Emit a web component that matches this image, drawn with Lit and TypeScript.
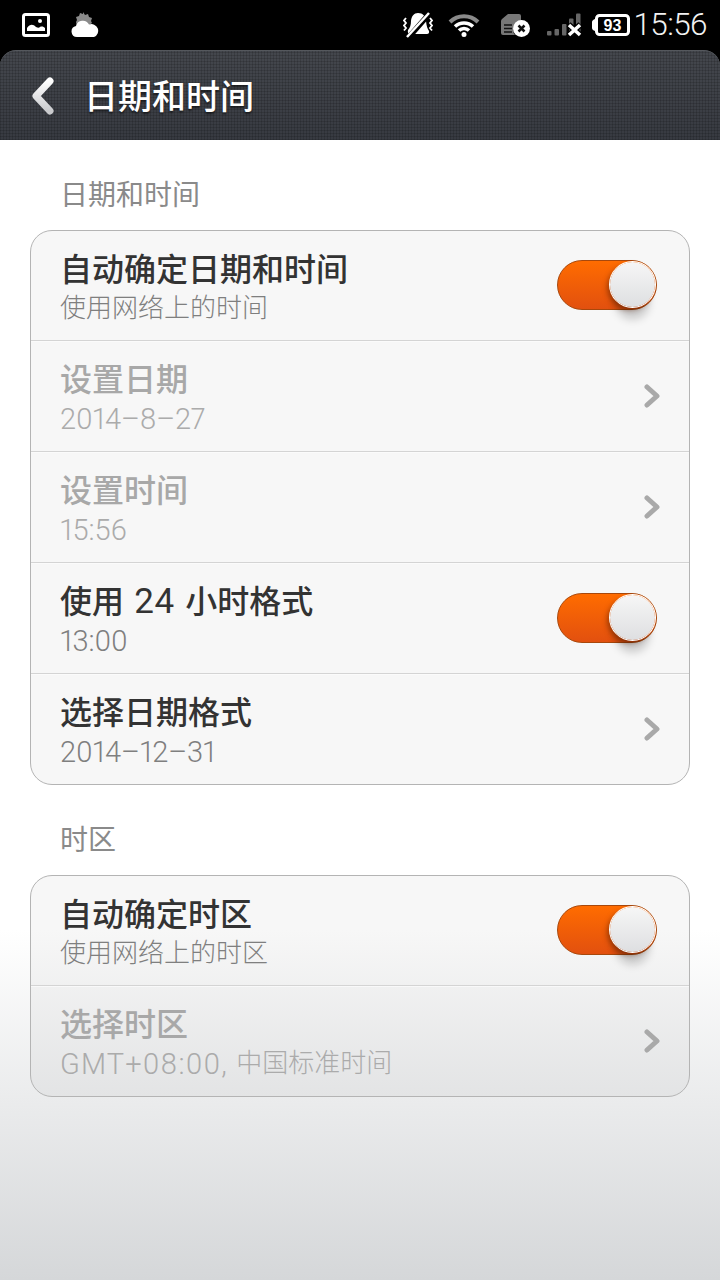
import {LitElement, html, css, svg} from 'lit';
import {customElement} from 'lit/decorators.js';

type Row = {title: string; sub: string; off?: boolean; sw?: boolean; wide?: boolean};

const dateRows: Row[] = [
  {title: '自动确定日期和时间', sub: '使用网络上的时间', sw: true},
  {title: '设置日期', sub: '2014–8–27', off: true},
  {title: '设置时间', sub: '15:56', off: true},
  {title: '使用 24 小时格式', sub: '13:00', sw: true},
  {title: '选择日期格式', sub: '2014–12–31'},
];

const zoneRows: Row[] = [
  {title: '自动确定时区', sub: '使用网络上的时区', sw: true},
  {title: '选择时区', sub: 'GMT+08:00, 中国标准时间', off: true, wide: true},
];

const chevron = svg`<path d="M3 3l10 9-10 9" fill="none" stroke="currentColor" stroke-width="5" stroke-linecap="round" stroke-linejoin="round"/>`;

// latin runs are set larger than the chinese around them
const mixed = (text: string) =>
  text.split(/([\x20-\x7e–]+)/).map((part, i) =>
    i % 2 ? html`<span class="lat">${part}</span>` : part
  );

@customElement('app-root')
export class AppRoot extends LitElement {
  static styles = css`
    :host {
      display: block;
      width: 720px;
      height: 1280px;
      overflow: hidden;
      background: #000;
      font-family: Roboto, "Noto Sans CJK SC", sans-serif;
    }
    .status {
      height: 50px;
      display: flex;
      align-items: center;
      padding: 0 13px 0 22px;
      color: #fff;
    }
    .status svg { display: block; flex: none; }
    .weather { margin-left: 21px; }
    .spacer { flex: 1; }
    .wifi { margin-left: 15px; }
    .sim { margin-left: 21px; }
    .signal { margin-left: 16px; }
    .battery { margin-left: 10px; }
    .clock {
      margin-left: 3px;
      font-size: 31.5px;
      font-weight: 300;
      letter-spacing: -.6px;
      line-height: 50px;
      color: #f2f2f2;
    }
    .bar {
      height: 90px;
      border-radius: 16px 16px 0 0;
      display: flex;
      align-items: center;
      box-sizing: border-box;
      padding-left: 30px;
      border-top: 1px solid #55585d;
      background-color: #3b3e45;
      background-image:
        repeating-linear-gradient(0deg, rgba(0,0,0,.14) 0 1px, transparent 1px 3px),
        repeating-linear-gradient(90deg, rgba(0,0,0,.14) 0 1px, transparent 1px 3px),
        linear-gradient(#44474d, #373a41);
    }
    .bar svg { display: block; }
    .bar h1 {
      margin: 0 0 0 28px;
      padding-top: 2px;
      font-size: 34px;
      font-weight: 500;
      line-height: 88px;
      color: #fff;
      text-shadow: 0 2px 2px rgba(0,0,0,.5);
    }
    main {
      height: 1140px;
      box-sizing: border-box;
      padding: 36px 30px 0;
      background: linear-gradient(#fff 0, #fff 790px, #d5d7d9 1140px);
    }
    .label {
      margin: 0 0 0 30px;
      font-size: 28px;
      line-height: 40px;
      height: 54px;
      color: #8a8a8a;
      font-weight: 400;
    }
    .card {
      border: 1px solid #b4b4b4;
      border-radius: 22px;
      background: rgba(0,0,0,.03);
      margin-bottom: 36px;
      overflow: hidden;
    }
    .row {
      height: 111px;
      box-sizing: border-box;
      border-bottom: 1px solid #d4d4d4;
      box-shadow: inset 0 1px 0 rgba(255,255,255,.55);
      display: flex;
      align-items: center;
      padding: 0 32px 0 29px;
    }
    .row:first-child { height: 110px; box-shadow: none; }
    .row:first-child .switch { margin-top: -2px; }
    .row:last-child { border-bottom: 0; height: 110px; }
    .text { flex: 1; padding-top: 4px; }
    .title {
      font-size: 32px;
      line-height: 40px;
      font-weight: 500;
      color: #333;
    }
    .title .lat {
      font-size: 35px;
      font-weight: 400;
      line-height: 1;
      white-space: pre;
      letter-spacing: .6px;
      word-spacing: 1px;
    }
    .sub {
      font-size: 26px;
      line-height: 36px;
      font-weight: 300;
      color: #7f7f7f;
    }
    .sub .lat {
      font-size: 29px;
      line-height: 1;
      white-space: pre;
      vertical-align: -1.5px;
      letter-spacing: -.15px;
      font-variant-numeric: proportional-nums;
    }
    .sub.wide .lat { letter-spacing: 1.15px; }
    .off .title { color: #a8a8a8; }
    .off .sub { color: #ababab; }
    .chev {
      display: block;
      color: #a9a9a9;
      margin-right: -3px;
    }
    .switch {
      position: relative;
      width: 100px;
      height: 50px;
      box-sizing: border-box;
      border-radius: 25px;
      background: linear-gradient(#ff6c00, #e2500f);
      border: 1.5px solid #a8480c;
    }
    .knob {
      position: absolute;
      right: 1px;
      top: 1px;
      width: 45px;
      height: 45px;
      border-radius: 50%;
      box-sizing: border-box;
      background: linear-gradient(#f6f6f6, #dedfe1);
      box-shadow: 0 0 0 1px #fff, -3px 3px 5px rgba(90,30,0,.5), 0 18px 10px -6px rgba(0,0,0,.2);
    }
  `;

  renderRow(r: Row) {
    return html`
      <div class="row ${r.off ? 'off' : ''}">
        <div class="text">
          <div class="title">${mixed(r.title)}</div>
          <div class="sub ${r.wide ? 'wide' : ''}">${mixed(r.sub)}</div>
        </div>
        ${r.sw
          ? html`<div class="switch"><div class="knob"></div></div>`
          : html`<svg class="chev" width="16" height="24" viewBox="0 0 16 24">${chevron}</svg>`}
      </div>
    `;
  }

  render() {
    return html`
      <div class="status">
        <svg width="28" height="24" viewBox="0 0 28 24">
          <rect x="1.5" y="1.5" width="25" height="21" rx="2" fill="none" stroke="#fff" stroke-width="3"/>
          <circle cx="18" cy="8" r="2" fill="#fff"/>
          <path d="M5 18v-3c3-4 6-4 9-1 2 1 3 1 4 0 2-1 4 0 5 1v3z" fill="#fff"/>
        </svg>
        <svg class="weather" width="29" height="26" viewBox="0 0 29 26">
          <path d="M12 0l2 3 3-1 1 3 3 1-1 3 1 2-8 6-7-2-1-5 1-2-1-3 3-1 1-3 3 1z" fill="#8a8a8a"/>
          <path d="M6 25a5.500 5.500 0 0 1-1-10.900 7 7 0 0 1 13-1.500 6 6 0 0 1 5 12.400z" fill="#fff"/>
        </svg>
        <div class="spacer"></div>
        <svg width="30" height="26" viewBox="0 0 30 26">
          <path d="M15 1c5 0 7.500 3 8 8 .5 5 1.500 8 3 10 .5 2-.5 3-2 3H7c-2 0-2.500-2-2-4 2-2 3-5 3-9 .5-5 3-8 7-8z" fill="#fff"/>
          <path d="M5 26L27 1" stroke="#000" stroke-width="5.500"/>
          <path d="M4 25L26 1" stroke="#fff" stroke-width="2.500"/>
          <path d="M3 6l-2 2.500 2 2.500-2 2.500 2 2.500-2 2.500M27 6l2 2.500-2 2.500 2 2.500-2 2.500 2 2.500" fill="none" stroke="#fff" stroke-width="1.800"/>
        </svg>
        <svg class="wifi" width="32" height="24" viewBox="0 0 32 24">
          <path d="M2 9a20 20 0 0 1 28 0" fill="none" stroke="#8a8a8a" stroke-width="4"/>
          <path d="M7 13.500a13 13 0 0 1 18 0M11 17.500a7 7 0 0 1 10 0" fill="none" stroke="#fff" stroke-width="3.500"/>
          <circle cx="16" cy="21.500" r="2.500" fill="#fff"/>
        </svg>
        <svg class="sim" width="30" height="25" viewBox="0 0 30 25">
          <path d="M7 1h11a2 2 0 0 1 2 2v6a8 8 0 0 0-6 13H2a2 2 0 0 1-2-2V8a3 3 0 0 1 1-2z" fill="#777"/>
          <path d="M3 12h8M3 15.500h8M3 19h8" stroke="#111" stroke-width="1.500"/>
          <circle cx="20.500" cy="15.500" r="8.500" fill="#fff"/>
          <path d="M17.500 12.500l6 6m0-6l-6 6" stroke="#111" stroke-width="2.500"/>
        </svg>
        <svg class="signal" width="35" height="24" viewBox="0 0 35 24">
          <rect x="0" y="18" width="4.500" height="4.500" rx="1" fill="#666"/>
          <rect x="7.500" y="16" width="4.500" height="6.500" rx="1" fill="#666"/>
          <rect x="15" y="11" width="4.500" height="11.500" rx="1" fill="#666"/>
          <rect x="22" y="5.500" width="4.500" height="17" rx="1" fill="#666"/>
          <rect x="29" y="0.500" width="4.500" height="22" rx="1" fill="#666"/>
          <path d="M21.500 11.500l12 11m0-11l-12 11" stroke="#000" stroke-width="6"/>
          <path d="M22 12l11 10m0-10l-11 10" stroke="#fff" stroke-width="3.500"/>
        </svg>
        <svg class="battery" width="38" height="22" viewBox="0 0 38 22">
          <path d="M0 8c0-1.500 1.500-2.500 3-3v12c-1.500-.5-3-1.500-3-3z" fill="#fff"/>
          <rect x="4.500" y="1.500" width="32" height="19" rx="3" fill="none" stroke="#fff" stroke-width="3"/>
          <text x="20.500" y="17" text-anchor="middle" fill="#fff" font-family="Liberation Sans" font-size="16" font-weight="700">93</text>
        </svg>
        <div class="clock">15:56</div>
      </div>
      <div class="bar">
        <svg width="26" height="38" viewBox="0 0 26 38">
          <defs>
            <linearGradient id="bk" x1="0" y1="0" x2="0" y2="1">
              <stop offset="0" stop-color="#fff"/>
              <stop offset="1" stop-color="#c9cacd"/>
            </linearGradient>
          </defs>
          <path d="M20 4L6 19l14 15" fill="none" stroke="url(#bk)" stroke-width="7" stroke-linecap="round" stroke-linejoin="round"/>
        </svg>
        <h1>日期和时间</h1>
      </div>
      <main>
        <h2 class="label">日期和时间</h2>
        <div class="card">${dateRows.map((r) => this.renderRow(r))}</div>
        <h2 class="label">时区</h2>
        <div class="card">${zoneRows.map((r) => this.renderRow(r))}</div>
      </main>
    `;
  }
}
